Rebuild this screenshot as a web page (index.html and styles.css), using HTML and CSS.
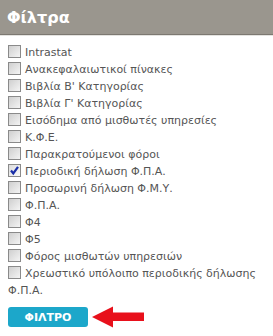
FILE: index.html
```html
<!DOCTYPE html>
<html>
<head>
<meta charset="utf-8">
<link rel="stylesheet" href="styles.css">
</head>
<body>
<div class="panel">
  <div class="header"><h2 class="title">Φίλτρα</h2></div>
  <div class="list">
    <label class="item"><span class="cb"></span>Intrastat</label>
    <label class="item"><span class="cb"></span>Ανακεφαλαιωτικοί πίνακες</label>
    <label class="item"><span class="cb"></span>Βιβλία Β' Κατηγορίας</label>
    <label class="item"><span class="cb"></span>Βιβλία Γ' Κατηγορίας</label>
    <label class="item"><span class="cb"></span>Εισόδημα από μισθωτές υπηρεσίες</label>
    <label class="item"><span class="cb"></span>Κ.Φ.Ε.</label>
    <label class="item"><span class="cb"></span>Παρακρατούμενοι φόροι</label>
    <label class="item"><span class="cb checked"><svg viewBox="0 0 13 13" width="13" height="13"><path d="M3 6.5 L5.3 9.5 L10 2.8" fill="none" stroke="#1a2fa8" stroke-width="2.2"/></svg></span>Περιοδική δήλωση Φ.Π.Α.</label>
    <label class="item"><span class="cb"></span>Προσωρινή δήλωση Φ.Μ.Υ.</label>
    <label class="item"><span class="cb"></span>Φ.Π.Α.</label>
    <label class="item"><span class="cb"></span>Φ4</label>
    <label class="item"><span class="cb"></span>Φ5</label>
    <label class="item"><span class="cb"></span>Φόρος μισθωτών υπηρεσιών</label>
    <label class="item"><span class="cb"></span>Χρεωστικό υπόλοιπο περιοδικής δήλωσης Φ.Π.Α.</label>
  </div>
  <div class="actions">
    <button class="btn">ΦΙΛΤΡΟ</button>
    <svg class="arrow" width="52" height="22" viewBox="0 0 52 22"><path d="M0 11 L21 0.5 L21 6.5 L52 6.5 L52 15 L21 15 L21 21.5 Z" fill="#e8101b"/></svg>
  </div>
</div>
</body>
</html>
```
FILE: styles.css
```css
html, body { margin: 0; padding: 0; background: #fff; }
body { font-family: "DejaVu Sans", Verdana, sans-serif; }
.panel { width: 273px; }
.header {
  height: 34px;
  background: #9a968e;
  box-shadow: 0 1px 0 #7c7871, 0 2px 0 #e4e3e0;
  display: flex;
  align-items: center;
  padding-left: 7px;
}
.title {
  margin: 0;
  color: #fff;
  font-size: 16px;
  font-weight: bold;
  font-family: "DejaVu Sans", Verdana, sans-serif;
}
.list { padding: 10px 8px 0 8px; }
.item {
  display: block;
  font-size: 11px;
  line-height: 17px;
  color: #555;
}
.cb {
  display: inline-block;
  width: 11px;
  height: 11px;
  border: 1px solid #8a8a8a;
  background: linear-gradient(135deg, #cfcfcf, #f4f4f4);
  vertical-align: -2px;
  margin-right: 4px;
  position: relative;
}
.cb svg { position: absolute; left: -1px; top: -1px; }
.cb.checked { background: linear-gradient(135deg, #dcdcdc, #fafafa); }
.actions {
  display: flex;
  align-items: center;
  padding: 7px 8px 0 8px;
  gap: 4px;
}
.btn {
  width: 80px;
  height: 20px;
  border: 0;
  border-radius: 3px;
  background: #1ca7ca;
  color: #fff;
  font-family: "DejaVu Sans", Verdana, sans-serif;
  font-weight: bold;
  font-size: 11px;
  padding: 0;
}
.arrow { display: block; }
```
